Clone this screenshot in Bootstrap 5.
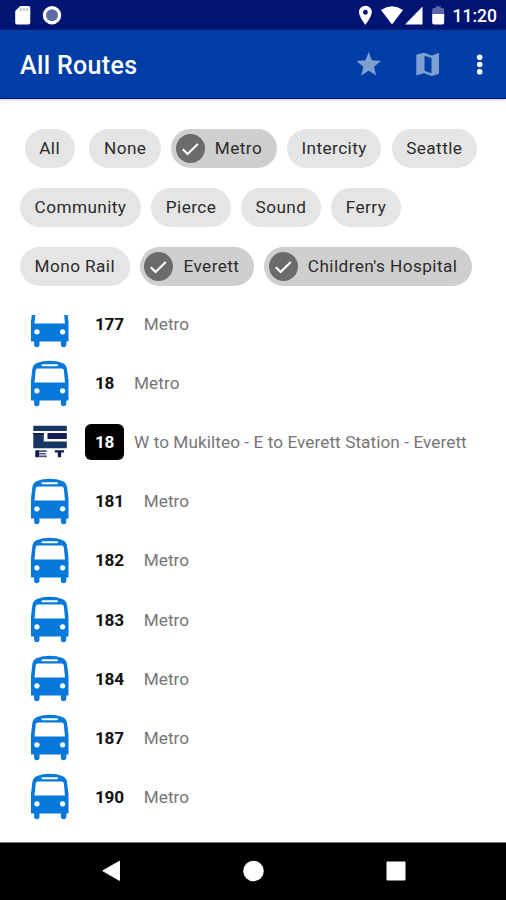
<!DOCTYPE html>
<html lang="en">
<head>
<meta charset="utf-8">
<meta name="viewport" content="width=device-width, initial-scale=1">
<title>All Routes</title>
<link href="https://cdn.jsdelivr.net/npm/bootstrap@5.3.0/dist/css/bootstrap.min.css" rel="stylesheet">
<style>
body{font-family:Roboto,"Liberation Sans",sans-serif;background:#fff;overflow:hidden}
svg{display:block;flex:none}
.screen{height:900px}
.statusbar{height:30px;background:#001473;padding:0 9px 0 14px}
.clock{font-size:17.5px;font-weight:500;line-height:32px;height:30px;margin-left:8px}
.appbar{height:68.5px;background:#003da6;border-bottom:1.5px solid #00128c;padding:0 20px;box-shadow:0 1px 3px #8874a866}
.appbar h1{font-size:25px;font-weight:500;line-height:32px;letter-spacing:.35px;padding-top:5px}
.appbar svg{margin-top:2px}
.filters{padding:30px 0 0 20px}
.chips{gap:10.2px;height:39px;margin-bottom:20px}
.chip{height:39px;border-radius:20px;padding:0 14.6px;background:#e5e5e5;color:#2b2b2b;font-size:17.2px;letter-spacing:.42px;line-height:39px;white-space:nowrap}
.chip.on{background:#cfcfcf;padding-left:4.5px}
.tick{width:29px;height:29px;margin-right:10.2px}
.lone{margin:0 4.6px}
.routes{margin-top:9px;height:527px}
.routes ul{margin-top:-20px}
.route{height:59.1px;padding-left:30px}
.num{font-size:17.2px;font-weight:700;line-height:18px;padding:9px 10.2px;border-radius:6px;margin-left:15.7px;color:#111;letter-spacing:-.2px}
.num.dark{background:#000;color:#fff}
.dest{font-size:17.2px;color:#757575;margin-left:9.6px;line-height:18px;white-space:nowrap;letter-spacing:.07px}
.navkeys{height:58px;background:#000;border-top:1px solid #777}
</style>
<script src="https://cdn.jsdelivr.net/npm/bootstrap@5.3.0/dist/js/bootstrap.bundle.min.js"></script>
</head>
<body>
<svg width="0" height="0" class="position-absolute" aria-hidden="true">
<symbol id="tick" viewBox="0 0 29 29"><circle cx="14.5" cy="14.5" r="14.5" fill="#6b6b6b"/><path d="M6.800 15.200l4.800 4.800L21.800 10" fill="none" stroke="#fff" stroke-width="2.100"/></symbol>
<symbol id="bus" viewBox="0 0 40 47"><path fill="#0679da" fill-rule="evenodd" d="M1 40.500V20.500L2.300 9.500Q2.800 4.800 7 3Q12.500 .8 19.700 .8T32.400 3Q36.600 4.800 37.100 9.500L38.500 20.500V40.500H36.300V43.500a2.700 2.700 0 0 1-5.400 0V40.500H9.500v3a2.700 2.700 0 0 1-5.400 0V40.500zM12.500 4.200a1 1 0 0 0 0 2.100h14.500a1 1 0 0 0 0-2.100zM7.700 8.500Q6 8.500 5.700 10.300L4.500 22.500H35L33.800 10.300Q33.500 8.500 31.800 8.500zM6.900 28.200a2.700 2.700 0 1 0 .01 0zM32.600 28.200a2.700 2.700 0 1 0 .01 0z"/></symbol>
</svg>
<div class="screen d-flex flex-column">
<div class="statusbar d-flex align-items-center text-white flex-shrink-0">
<svg width="50" height="30" viewBox="0 0 50 30"><path d="M6.200 6H14.500Q16.300 6 16.300 7.800V22.700Q16.300 24.500 14.500 24.500H3Q1.200 24.500 1.200 22.700V11z" fill="#fff"/><path d="M7 8.500v2M10 8.500v2M13 8.500v2" stroke="#8189b9" stroke-width="1.300"/><circle cx="38" cy="15.200" r="7.600" fill="#5d6aaa" stroke="#fff" stroke-width="3.200"/></svg>
<svg class="ms-auto" width="87" height="30" viewBox="358 0 87 30"><path fill="#fff" fill-rule="evenodd" d="M365.400 5.700a6.400 6.400 0 0 1 6.400 6.400c0 4.800-6.400 12.800-6.400 12.800s-6.400-8-6.400-12.800a6.400 6.400 0 0 1 6.400-6.400zM365.400 9.800a2.400 2.400 0 1 0 .01 0zM381 9.900Q392 2.500 403 9.900L392 24.500zM405 24.500 422.500 6.500V24.500zM432.200 14h12v8.700q0 1.800-1.800 1.800h-8.400q-1.800 0-1.800-1.800z"/><path fill="#5967aa" d="M432.200 14V9.800q0-1.800 1.800-1.800h1.700V6.300h5V8h1.700q1.800 0 1.800 1.800V14z"/></svg>
<span class="clock">11:20</span>
</div>
<header class="appbar d-flex align-items-center text-white flex-shrink-0">
<h1 class="m-0 me-auto">All Routes</h1>
<svg width="130" height="36" viewBox="356 47 130 36"><path fill="#7f9fd1" d="M368.700 52 371.900 60.300 381 60.900 374 66.700 376.200 75.500 368.700 70.700 361.200 75.500 363.400 66.700 356.400 60.900 365.500 60.300z"/><path fill="#7f9fd1" fill-rule="evenodd" d="M416.300 54.800 424 52.800 432 55.400 439 52.800V73.700L432 76 424 73.200 416.300 75.500zM424.500 55.700V70.800L431.500 73.200V58.100z"/><g fill="#fff"><circle cx="479.700" cy="57.200" r="2.800"/><circle cx="479.700" cy="64.500" r="2.800"/><circle cx="479.700" cy="71.800" r="2.800"/></g></svg>
</header>
<section class="filters flex-shrink-0">
<div class="chips d-flex"><span class="chip lone">All</span><span class="chip">None</span><span class="chip on d-flex align-items-center"><svg class="tick"><use href="#tick"/></svg>Metro</span><span class="chip">Intercity</span><span class="chip">Seattle</span></div>
<div class="chips d-flex"><span class="chip">Community</span><span class="chip">Pierce</span><span class="chip">Sound</span><span class="chip">Ferry</span></div>
<div class="chips d-flex"><span class="chip">Mono Rail</span><span class="chip on d-flex align-items-center"><svg class="tick"><use href="#tick"/></svg>Everett</span><span class="chip on d-flex align-items-center"><svg class="tick"><use href="#tick"/></svg>Children's Hospital</span></div>
</section>
<main class="routes overflow-hidden flex-shrink-0">
<ul class="list-unstyled mb-0">
<li class="route d-flex align-items-center"><svg width="39" height="47"><use href="#bus" width="40" height="47"/></svg><span class="num">177</span><span class="dest">Metro</span></li>
<li class="route d-flex align-items-center"><svg width="39" height="47"><use href="#bus" width="40" height="47"/></svg><span class="num">18</span><span class="dest">Metro</span></li>
<li class="route d-flex align-items-center"><svg width="39" height="47" viewBox="0 0 39 47"><path fill="#173661" d="M3.300 6.800H36.800V12H3.300zM3.300 14H13.800V22.500H36.800V29.300H3.300z"/><path fill="#101c56" d="M17.500 14H36.800V20H17.500zM3.300 14H13.800V15.500H3.300z"/><path fill="#101c56" d="M5.300 31.300H9.300V38.300H5.300zM24.800 31.300H34V33.500H31.200V38.300H27.800V33.500H24.800z"/><path fill="#4b5581" d="M9.300 31.300H16.800V33.100H9.300zM9.300 34H16V35.600H9.300zM9.300 36.500H16.800V38.300H9.300z"/></svg><span class="num dark">18</span><span class="dest">W to Mukilteo - E to Everett Station - Everett</span></li>
<li class="route d-flex align-items-center"><svg width="39" height="47"><use href="#bus" width="40" height="47"/></svg><span class="num">181</span><span class="dest">Metro</span></li>
<li class="route d-flex align-items-center"><svg width="39" height="47"><use href="#bus" width="40" height="47"/></svg><span class="num">182</span><span class="dest">Metro</span></li>
<li class="route d-flex align-items-center"><svg width="39" height="47"><use href="#bus" width="40" height="47"/></svg><span class="num">183</span><span class="dest">Metro</span></li>
<li class="route d-flex align-items-center"><svg width="39" height="47"><use href="#bus" width="40" height="47"/></svg><span class="num">184</span><span class="dest">Metro</span></li>
<li class="route d-flex align-items-center"><svg width="39" height="47"><use href="#bus" width="40" height="47"/></svg><span class="num">187</span><span class="dest">Metro</span></li>
<li class="route d-flex align-items-center"><svg width="39" height="47"><use href="#bus" width="40" height="47"/></svg><span class="num">190</span><span class="dest">Metro</span></li>
</ul>
</main>
<nav class="navkeys mt-auto flex-shrink-0"><svg width="506" height="57" viewBox="0 843 506 57"><path fill="#fff" stroke="#fff" stroke-linejoin="round" d="M102.800 870.800 119.500 861.200V880.400z"/><circle cx="253.500" cy="871" r="10.300" fill="#fff"/><rect x="386.500" y="861.500" width="19" height="19" rx="1" fill="#fff"/></svg></nav>
</div>
</body>
</html>
